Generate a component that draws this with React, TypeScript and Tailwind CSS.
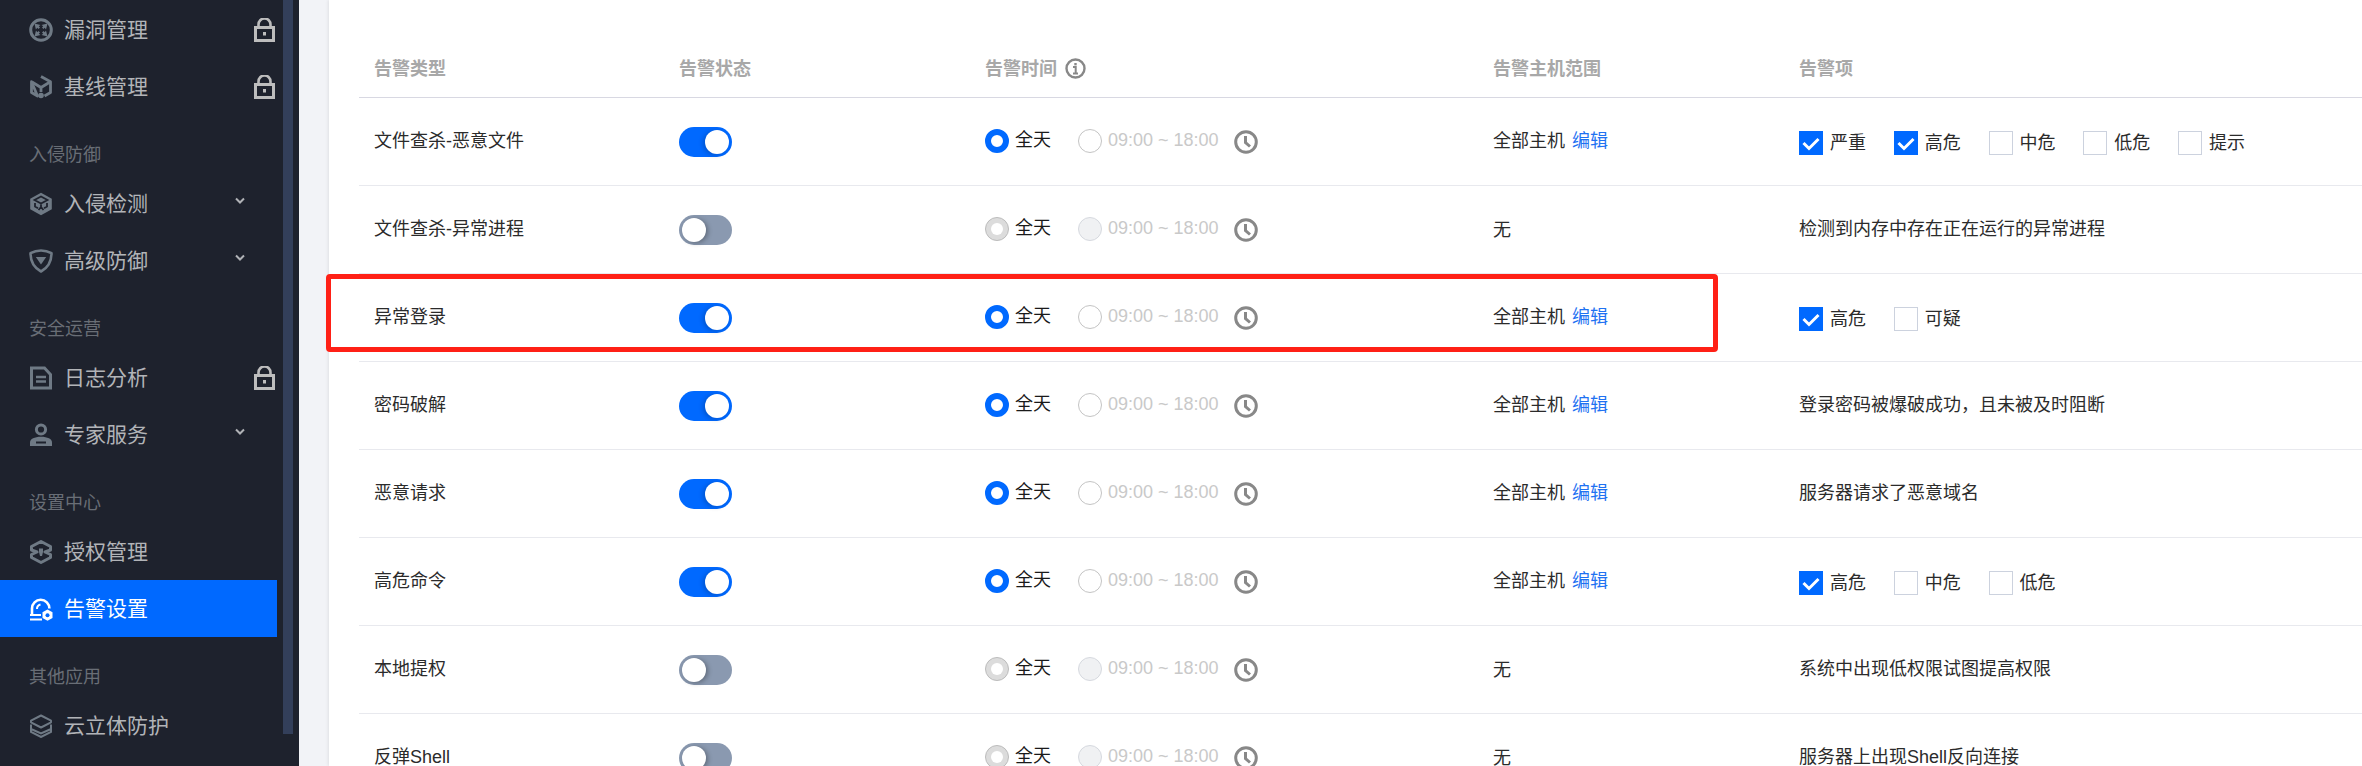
import React from 'react';

const FONT = "font-['Liberation_Sans','Noto_Sans_CJK_SC',sans-serif]";

// sidebar icons, all drawn on a 24 box
const NavIcon: React.FC<{ name: string; active?: boolean }> = ({ name, active }) => {
  const c = active ? '#ffffff' : '#6f7a85';
  const bg = active ? '#0069ff' : '#1e222d';
  return (
    <svg viewBox="0 0 24 24" className="w-6 h-6 shrink-0" fill="none">
      {name === 'vuln' && (
        <>
          <circle cx="12" cy="12" r="10.3" stroke={c} strokeWidth="3" />
          <path d="M5.500 5.500l6 1.500-1.700 1.300 1.200 1.200-1.500 1.500-1.200-1.200L6.900 11.500zM18.500 5.500l-1.500 6-1.300-1.700-1.200 1.200-1.500-1.500 1.200-1.200-1.700-1.300zM5.500 18.500l1.500-6 1.300 1.700 1.200-1.200 1.500 1.500-1.200 1.200 1.700 1.300zM18.500 18.500l-6-1.500 1.700-1.300-1.200-1.200 1.500-1.500 1.200 1.200 1.300-1.700z" fill={c} />
        </>
      )}
      {name === 'base' && (
        <>
          <path d="M12 1.500l9.500 5.200v10.800L15.500 21M8.500 21l-6-3.500V6.700z" stroke={c} strokeWidth="2.800" strokeLinejoin="round" />
          <path d="M3 7l9 5.500L21 7M12 12.500V17" stroke={c} strokeWidth="2.800" />
          <circle cx="12" cy="20.500" r="2.800" fill={c} />
        </>
      )}
      {name === 'cube' && (
        <>
          <path d="M12 .8l10.8 5.9v10.6L12 23.2 1.2 17.3V6.7z" fill={c} />
          <path d="M5.500 8L12 11.500 18.500 8l-6.500-3.500zM12 11.500V15M6 11v3.500l3 1.700M18 11v3.500l-3 1.700M12 15l-2.500 3M12 15l2.500 3" stroke={bg} strokeWidth="1.800" />
        </>
      )}
      {name === 'shield' && (
        <>
          <path d="M12 1.500c3.600 0 7.400 1 10.500 2.700 0 8-3.500 14.500-10.500 18.300C5 18.700 1.500 12.200 1.500 4.200 4.600 2.500 8.400 1.500 12 1.500z" stroke={c} strokeWidth="2.600" strokeLinejoin="round" />
          <path d="M6.800 8h10.400L12 15.500z" fill={c} />
        </>
      )}
      {name === 'doc' && (
        <>
          <path d="M2.500 2h13l6 6.500V22h-19z" stroke={c} strokeWidth="3" strokeLinejoin="miter" />
          <path d="M7 11h10M7 15.500h10" stroke={c} strokeWidth="2.600" />
        </>
      )}
      {name === 'user' && (
        <>
          <circle cx="12" cy="6.500" r="4.600" stroke={c} strokeWidth="3" />
          <path d="M1 23v-3.500C1 16 5.500 13.800 12 13.800S23 16 23 19.500V23z" fill={c} />
          <path d="M7 19.500h10" stroke={bg} strokeWidth="2" />
        </>
      )}
      {name === 'auth' && (
        <>
          <path d="M12 1.500l9.500 5v3.500L16 12l5.500 2.500v3l-9.500 5-9.500-5v-3L8 12 2.500 10V6.500z" stroke={c} strokeWidth="3" strokeLinejoin="round" />
          <path d="M10 8.500h4v3.500l-1 4h-2l-1-4z" fill={c} />
        </>
      )}
      {name === 'alarm' && (
        <>
          <path d="M3 19v-7.500a8.700 8.700 0 0 1 17.400 0" stroke={c} strokeWidth="2.600" />
          <path d="M11.500 7.500a4.500 4.500 0 0 0-3.500 4.500" stroke={c} strokeWidth="2" />
          <path d="M1 18h11M1 22.500h12" stroke={c} strokeWidth="2" />
          <path d="M18.500 12.500l5 2.800v5.700l-5 2.800-5-2.800v-5.700z" fill={c} />
          <circle cx="18.500" cy="18.200" r="2" fill={bg} />
        </>
      )}
      {name === 'box' && (
        <>
          <path d="M12 1.500l10 5.200v1.600L12 13.500 2 8.300V6.700z" stroke={c} strokeWidth="2" strokeLinejoin="round" />
          <path d="M2 10.500v7.500l10 5 10-5v-7.500M2 15l10 4.500L22 15" stroke={c} strokeWidth="2" />
        </>
      )}
    </svg>
  );
};

const LockIcon = () => (
  <svg viewBox="0 0 21 24" className="w-[21px] h-6 shrink-0" fill="none">
    <path d="M4.500 9V6.500a6 6 0 0 1 12 0V9" stroke="#bdbdbd" strokeWidth="2.600" />
    <rect x="1.500" y="9.500" width="18" height="13" stroke="#bdbdbd" strokeWidth="3" />
    <rect x="9" y="14" width="3" height="3.500" fill="#bdbdbd" />
  </svg>
);

const Chevron = () => (
  <svg viewBox="0 0 10 7" className="w-[10px] h-[7px] shrink-0" fill="none">
    <path d="M1 1.500l4 4 4-4" stroke="#b0b2b6" strokeWidth="2" />
  </svg>
);

type NavEntry =
  | { label: string }
  | { text: string; icon: string; tail?: 'lock' | 'chevron'; active?: boolean };

const NAV: NavEntry[] = [
  { text: '漏洞管理', icon: 'vuln', tail: 'lock' },
  { text: '基线管理', icon: 'base', tail: 'lock' },
  { label: '入侵防御' },
  { text: '入侵检测', icon: 'cube', tail: 'chevron' },
  { text: '高级防御', icon: 'shield', tail: 'chevron' },
  { label: '安全运营' },
  { text: '日志分析', icon: 'doc', tail: 'lock' },
  { text: '专家服务', icon: 'user', tail: 'chevron' },
  { label: '设置中心' },
  { text: '授权管理', icon: 'auth' },
  { text: '告警设置', icon: 'alarm', active: true },
  { label: '其他应用' },
  { text: '云立体防护', icon: 'box' },
];

const Sidebar = () => (
  <aside className="w-[299px] h-full shrink-0 bg-[#1e222d] flex">
    <nav className="w-[277px] pt-px">
      {NAV.map((n, i) =>
        'label' in n ? (
          <div key={i} className="h-[60px] pl-[29px] pt-[29px] text-[18px] leading-[22px] text-[#696e76]">
            {n.label}
          </div>
        ) : (
          <div
            key={i}
            className={`h-[57px] flex items-center pl-[29px] ${n.active ? 'bg-[#0069ff] text-white' : 'text-[#b2b4b8]'}`}
          >
            <NavIcon name={n.icon} active={n.active} />
            <span className="ml-[11px] text-[21px] flex-1">{n.text}</span>
            {n.tail === 'lock' && (
              <span className="mr-[2px]">
                <LockIcon />
              </span>
            )}
            {n.tail === 'chevron' && (
              <span className="mr-[32px] mb-[6px]">
                <Chevron />
              </span>
            )}
          </div>
        ),
      )}
    </nav>
    {/* scrollbar thumb */}
    <div className="ml-[6px] w-[10px] h-[734px] bg-[#333f5a]" />
  </aside>
);

const Toggle: React.FC<{ on: boolean }> = ({ on }) => (
  <div className={`mt-px w-[53px] h-[30px] rounded-full p-[3px] flex ${on ? 'bg-[#0069ff] justify-end' : 'bg-[#8a99b0] justify-start'}`}>
    <div className={`w-6 h-6 rounded-full bg-white ${on ? 'shadow-[-2px_1px_5px_rgba(0,0,0,0.2)]' : 'shadow-[2px_1px_5px_rgba(0,0,0,0.3)]'}`} />
  </div>
);

const TimeCell: React.FC<{ on: boolean }> = ({ on }) => (
  <div className="flex items-center h-6">
    {on ? (
      <div className="w-6 h-6 rounded-full border-[6.5px] border-[#0069ff] bg-white -mt-[2px]" />
    ) : (
      <div className="w-6 h-6 rounded-full border border-[#bcbcbc] bg-[#dcdcdc] flex items-center justify-center -mt-[2px]">
        <div className="w-3 h-3 rounded-full bg-white" />
      </div>
    )}
    <span className="ml-[6px] text-[#1a1a1a] -mt-[2px]">全天</span>
    <div className={`ml-[27px] w-6 h-6 rounded-full border -mt-[2px] ${on ? 'border-[#c4c4c4] bg-white' : 'border-[#d6d9df] bg-[#f0f1f3]'}`} />
    <span className="ml-[6px] text-[#c9c9c9] -mt-[2px]">09:00 ~ 18:00</span>
    <svg viewBox="0 0 24 24" className="ml-[15px] w-6 h-6" fill="none">
      <circle cx="12" cy="12" r="10.300" stroke="#888888" strokeWidth="3" />
      <path d="M11.500 6v6.500l4.500 4" stroke="#888888" strokeWidth="3" />
    </svg>
  </div>
);

const Check: React.FC<{ label: string; on?: boolean }> = ({ label, on }) => (
  <div className="flex items-center w-[94.750px]">
    {on ? (
      <div className="w-6 h-6 bg-[#0069ff] shrink-0 flex items-center justify-center">
        <svg viewBox="0 0 24 24" className="w-6 h-6" fill="none">
          <path d="M4.500 12l5.500 5.500L19.500 8" stroke="#ffffff" strokeWidth="3" />
        </svg>
      </div>
    ) : (
      <div className="w-6 h-6 bg-white border border-[#ccd2de] shrink-0" />
    )}
    <span className="ml-[7px] whitespace-nowrap">{label}</span>
  </div>
);

type Row = {
  name: string;
  on: boolean;
  checks?: [string, boolean][];
  desc?: string;
};

const ROWS: Row[] = [
  { name: '文件查杀-恶意文件', on: true, checks: [['严重', true], ['高危', true], ['中危', false], ['低危', false], ['提示', false]] },
  { name: '文件查杀-异常进程', on: false, desc: '检测到内存中存在正在运行的异常进程' },
  { name: '异常登录', on: true, checks: [['高危', true], ['可疑', false]] },
  { name: '密码破解', on: true, desc: '登录密码被爆破成功，且未被及时阻断' },
  { name: '恶意请求', on: true, desc: '服务器请求了恶意域名' },
  { name: '高危命令', on: true, checks: [['高危', true], ['中危', false], ['低危', false]] },
  { name: '本地提权', on: false, desc: '系统中出现低权限试图提高权限' },
  { name: '反弹Shell', on: false, desc: '服务器上出现Shell反向连接' },
];

const COLS = 'grid grid-cols-[305px_306px_508px_306px_1fr] pl-[15px]';

const App: React.FC = () => (
  <div className={`${FONT} h-[766px] w-full flex overflow-hidden bg-[#f2f3f7] text-[18px] text-[#2b2b2b]`}>
    <Sidebar />
    <main className="relative flex-1 pl-[30px]">
      <div className="h-full bg-white pl-[30px] shadow-[-1px_0_3px_rgba(0,0,0,0.08)]">
        <div className={`${COLS} h-[98px] pt-[59px] border-b border-[#d8d8e2] leading-[20px] font-semibold text-[#a8a8a8]`}>
          <div>告警类型</div>
          <div>告警状态</div>
          <div className="flex items-center h-5">
            告警时间
            <svg viewBox="0 0 21 21" className="ml-2 w-[21px] h-[21px] -mt-[2px]" fill="none">
              <circle cx="10.500" cy="10.500" r="9" stroke="#888888" strokeWidth="2.400" />
              <rect x="9.300" y="5" width="2.400" height="2.400" fill="#888888" />
              <path d="M8 9h2.700v6M8 15.500h5" stroke="#888888" strokeWidth="2" />
            </svg>
          </div>
          <div>告警主机范围</div>
          <div>告警项</div>
        </div>
        {ROWS.map((r) => (
          <div key={r.name} className={`${COLS} h-[88px] items-center border-b border-[#e8e9ee]`}>
            <div>{r.name}</div>
            <div>
              <Toggle on={r.on} />
            </div>
            <TimeCell on={r.on} />
            <div>
              {r.on ? (
                <>
                  全部主机 <span className="ml-[2px] text-[#1f72f2]">编辑</span>
                </>
              ) : (
                <span className="relative top-px">无</span>
              )}
            </div>
            {r.checks ? (
              <div className="flex mt-[3px]">
                {r.checks.map(([label, on]) => (
                  <Check key={label} label={label} on={on} />
                ))}
              </div>
            ) : (
              <div>{r.desc}</div>
            )}
          </div>
        ))}
      </div>
      {/* red annotation drawn over the screenshot */}
      <div className="absolute left-[27px] top-[274px] w-[1392px] h-[78px] border-[5px] border-[#ff2016] rounded-[4px] pointer-events-none" />
    </main>
  </div>
);

export default App;
